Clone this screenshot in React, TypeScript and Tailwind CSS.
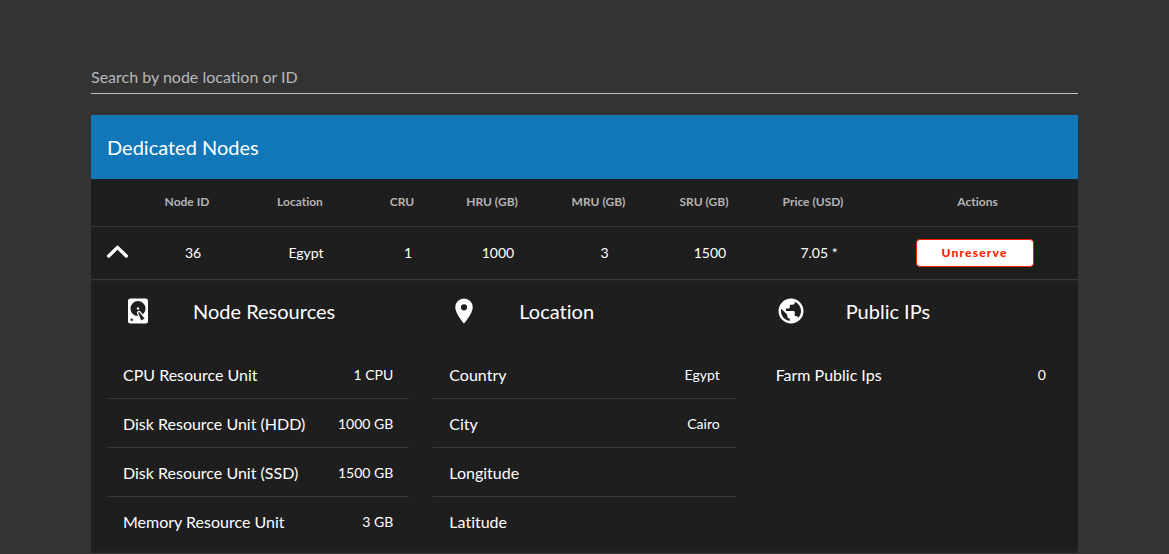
import { useState } from "react";

const icons = {
  disk: "M6,2H18A2,2 0 0,1 20,4V20A2,2 0 0,1 18,22H6A2,2 0 0,1 4,20V4A2,2 0 0,1 6,2M12,4A6,6 0 0,0 6,10C6,13.31 8.69,16 12.1,16L11.22,13.77C10.95,13.29 11.11,12.68 11.59,12.4L12.45,11.9C12.93,11.63 13.54,11.79 13.82,12.27L15.74,14.69C17.12,13.59 18,11.9 18,10A6,6 0 0,0 12,4M12,9A1,1 0 0,1 13,10A1,1 0 0,1 12,11A1,1 0 0,1 11,10A1,1 0 0,1 12,9M7,18A1,1 0 0,0 6,19A1,1 0 0,0 7,20A1,1 0 0,0 8,19A1,1 0 0,0 7,18M12.09,13.27L14.58,19.58L17.17,18.08L12.95,12.77L12.09,13.27Z",
  marker:
    "M12,11.5A2.5,2.5 0 0,1 9.5,9A2.5,2.5 0 0,1 12,6.5A2.5,2.5 0 0,1 14.5,9A2.5,2.5 0 0,1 12,11.5M12,2A7,7 0 0,0 5,9C5,14.25 12,22 12,22C12,22 19,14.25 19,9A7,7 0 0,0 12,2Z",
  earth:
    "M17.9,17.39C17.64,16.59 16.89,16 16,16H15V13A1,1 0 0,0 14,12H8V10H10A1,1 0 0,0 11,9V7H13A2,2 0 0,0 15,5V4.59C17.93,5.77 20,8.64 20,12C20,14.08 19.2,15.97 17.9,17.39M11,19.93C7.05,19.44 4,16.08 4,12C4,11.38 4.08,10.78 4.21,10.21L9,15V16A2,2 0 0,0 11,18M12,2A10,10 0 0,0 2,12A10,10 0 0,0 12,22A10,10 0 0,0 22,12A10,10 0 0,0 12,2Z",
};

const headers = ["Node ID", "Location", "CRU", "HRU (GB)", "MRU (GB)", "SRU (GB)", "Price (USD)"];
const values = ["36", "Egypt", "1", "1000", "3", "1500", "7.05 *"];

type Section = { title: string; icon: string; rows: [string, string][] };

const sections: Section[] = [
  {
    title: "Node Resources",
    icon: icons.disk,
    rows: [
      ["CPU Resource Unit", "1 CPU"],
      ["Disk Resource Unit (HDD)", "1000 GB"],
      ["Disk Resource Unit (SSD)", "1500 GB"],
      ["Memory Resource Unit", "3 GB"],
    ],
  },
  {
    title: "Location",
    icon: icons.marker,
    rows: [
      ["Country", "Egypt"],
      ["City", "Cairo"],
      ["Longitude", ""],
      ["Latitude", ""],
    ],
  },
  { title: "Public IPs", icon: icons.earth, rows: [["Farm Public Ips", "0"]] },
];

function DetailSection({ title, icon, rows }: Section) {
  return (
    <section className="min-w-0 flex-1">
      <div className="flex h-[70px] items-start gap-10 px-4 pt-4">
        <svg viewBox="0 0 24 24" className="size-[30px] shrink-0 fill-white" aria-hidden="true">
          <path d={icon} fillRule="evenodd" />
        </svg>
        <h2 className="text-xl leading-[30px]">{title}</h2>
      </div>
      <dl className="divide-y divide-[#383838]">
        {rows.map(([name, value]) => (
          <div key={name} className="flex h-[49px] items-center justify-between px-4 pt-0.5 last:h-12">
            <dt className="text-base">{name}</dt>
            <dd className="text-sm">{value}</dd>
          </div>
        ))}
      </dl>
    </section>
  );
}

export default function App() {
  const [open, setOpen] = useState(true);
  return (
    <main className="min-h-screen bg-[#333333] px-[91px] pt-[62px] font-['Lato',sans-serif] text-white [font-variant-ligatures:no-common-ligatures]">
      <input
        type="text"
        aria-label="Search by node location or ID"
        placeholder="Search by node location or ID"
        className="block h-8 w-full border-b border-[#c2c2c2] bg-transparent pb-0.5 text-base text-white outline-none placeholder:text-[#b8b8b8]"
      />
      <div className="mt-[21px] bg-[#1e1e1e]">
        <h1 className="flex h-16 items-center bg-[#1177b8] px-4 text-xl">Dedicated Nodes</h1>
        <table className="w-full table-fixed border-collapse">
          <colgroup>
            <col className="w-[57px]" />
            <col className="w-[90px]" />
            <col className="w-[136px]" />
            <col className="w-[68px]" />
            <col className="w-[112px]" />
            <col className="w-[101px]" />
            <col className="w-[110px]" />
            <col className="w-[108px]" />
            <col className="w-[205px]" />
          </colgroup>
          <thead>
            <tr className="h-[47px] border-b border-[#383838] text-xs text-[#b4b4b4]">
              <td />
              {headers.map((h) => (
                <th key={h} scope="col" className="pr-3 font-bold whitespace-nowrap">
                  {h}
                </th>
              ))}
              <th scope="col" className="pl-1 font-bold">
                Actions
              </th>
            </tr>
          </thead>
          <tbody>
            <tr className="h-[53px] border-b border-[#383838] text-center text-sm">
              <td className="pl-4 text-left">
                <button
                  type="button"
                  aria-label="Toggle node details"
                  aria-expanded={open}
                  onClick={() => setOpen(!open)}
                  className="block pb-0.5"
                >
                  <svg viewBox="0 0 21 13" className="h-[13px] w-[21px]" fill="none" stroke="white" strokeWidth="3.4">
                    <path d="M1.7 11L10.5 2.4L19.3 11" strokeLinecap="round" strokeLinejoin="round" />
                  </svg>
                </button>
              </td>
              {values.map((v, i) => (
                <td key={headers[i]}>{v}</td>
              ))}
              <td className="pr-0.5">
                <button
                  type="button"
                  className="mx-auto block h-7 w-[118px] rounded-[4px] border border-[#ff2000] bg-white text-xs font-black tracking-widest text-[#ff2000]"
                >
                  Unreserve
                </button>
              </td>
            </tr>
          </tbody>
        </table>
        {open && (
          <div className="flex gap-6 border-b border-[#383838] px-4 pb-2 shadow-[inset_0_4px_8px_-5px_rgba(50,50,50,0.75),inset_0_-4px_8px_-5px_rgba(50,50,50,0.75)]">
            {sections.map((s) => (
              <DetailSection key={s.title} {...s} />
            ))}
          </div>
        )}
      </div>
    </main>
  );
}
